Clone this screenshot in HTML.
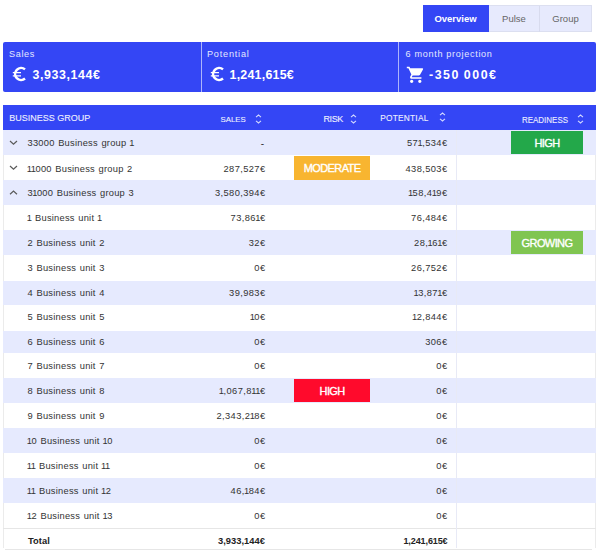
<!DOCTYPE html>
<html><head><meta charset="utf-8">
<style>
*{box-sizing:border-box;margin:0;padding:0}
html,body{width:600px;height:553px;background:#fff;overflow:hidden;font-family:"Liberation Sans",sans-serif;color:#333}
.abs{position:absolute}
.tabs{position:absolute;left:489px;top:5px;width:103px;height:27px;border:1px solid #dcdff0;border-left:none;background:#e7eafd}
.tab{position:absolute;top:0;height:26px;line-height:26px;font-size:9.5px;text-align:center;color:#666}
.ov{position:absolute;left:423px;top:5px;width:66px;height:27px;background:#3446f5;color:#fff;font-weight:700;font-size:9.5px;line-height:27px;text-align:center;padding-right:1px}
.cards{position:absolute;left:3px;top:42px;width:593px;height:50px;background:#3446f5;border-radius:2px}
.card{position:absolute;top:0;height:50px}
.card .lbl{position:absolute;left:6px;top:6.5px;font-size:9.1px;color:#e4e8ff;white-space:nowrap;letter-spacing:0.65px}
.card .val{position:absolute;left:29.5px;top:26px;font-size:12px;font-weight:700;color:#fff;white-space:nowrap;letter-spacing:0.6px}
.sep{position:absolute;top:0;width:1px;height:50px;background:rgba(255,255,255,0.6)}
.tbl{position:absolute;left:3px;top:105px;width:593px;height:443px;border-left:1px solid #ebebeb;border-right:1px solid #ebebeb}
.bline{position:absolute;left:5px;width:587px;top:549px;height:1px;background:#e6e6e6}
.hdr{position:absolute;left:3px;width:593px;top:105px;height:25px;background:#3446f5}
.h{position:absolute;color:#eef0ff;-webkit-text-stroke:0.1px #eef0ff;white-space:nowrap;font-size:9px}
.row{position:absolute;left:3px;width:593px;height:25px}
.row.alt{background:#e6eafe}
.t{position:absolute;white-space:nowrap;font-size:9.3px;color:#333;line-height:11px;letter-spacing:0.25px}
.n{letter-spacing:0.4px}
.o{letter-spacing:-0.5px;margin-left:-0.6px}
.w{word-spacing:0.7px}
.o2{letter-spacing:-0.5px;margin-left:-0.7px}
.r{text-align:right}
.vdiv{position:absolute;left:455.5px;top:130px;width:1px;height:418px;background:#e8eaf6}
.badge{position:absolute;color:#fff;font-size:11px;letter-spacing:-0.6px;-webkit-text-stroke:0.35px #fff;text-align:center;display:flex;align-items:center;justify-content:center;padding-top:0.6px}
.tline{position:absolute;left:3px;width:593px;top:528px;height:1px;background:#e6e6e6}

</style></head><body>

<div class="ov">Overview</div>
<div class="tabs">
  <div class="tab" style="left:0;width:51px;border-right:1px solid #d8dbee">Pulse</div>
  <div class="tab" style="left:51px;width:51px">Group</div>
</div>

<div class="cards">
  <div class="card" style="left:0;width:197px">
    <div class="lbl">Sales</div>
    <svg class="abs" style="left:9px;top:24px" width="15" height="16" viewBox="0 0 15 16"><path d="M13.01 3.35 A6 6 0 1 0 13.01 12.55" fill="none" stroke="#fff" stroke-width="2.5"/><path d="M0.8 6.65 H9 M0.8 9.85 H9" stroke="#fff" stroke-width="1.4"/></svg>
    <div class="val" style="font-size:12.4px;letter-spacing:0.6px;top:25.5px">3,933,144€</div>
  </div>
  <div class="sep" style="left:197.5px"></div>
  <div class="card" style="left:198px;width:197px">
    <div class="lbl" style="letter-spacing:0.8px">Potential</div>
    <svg class="abs" style="left:9px;top:24px" width="15" height="16" viewBox="0 0 15 16"><path d="M13.01 3.35 A6 6 0 1 0 13.01 12.55" fill="none" stroke="#fff" stroke-width="2.5"/><path d="M0.8 6.65 H9 M0.8 9.85 H9" stroke="#fff" stroke-width="1.4"/></svg>
    <div class="val" style="left:28.5px;font-size:12.4px;letter-spacing:0.25px;top:25.5px">1,241,615€</div>
  </div>
  <div class="sep" style="left:395px"></div>
  <div class="card" style="left:396px;width:197px">
    <div class="lbl" style="left:6.5px;letter-spacing:0.68px">6 month projection</div>
    <svg class="abs" style="left:7px;top:22.5px" width="19.5" height="19.5" viewBox="0 0 24 24"><path fill="#fff" d="M7 18c-1.1 0-1.990.9-1.99 2S5.9 22 7 22s2-.9 2-2-.9-2-2-2zM1 2v2h2l3.6 7.590-1.35 2.45c-.16.28-.25.61-.25.96 0 1.1.9 2 2 2h12v-2H7.42c-.14 0-.25-.11-.25-.25l.03-.12.9-1.630h7.45c.75 0 1.41-.41 1.75-1.030l3.58-6.490A1.003 1.003 0 0 0 20 4H5.210l-.94-2H1zm16 16c-1.1 0-1.99.9-1.99 2s.89 2 1.99 2 2-.9 2-2-.9-2-2-2z"/></svg>
    <div class="val" style="left:30px;font-size:12.4px;letter-spacing:1.55px;word-spacing:-1.2px;top:25.5px">-350 000€</div>
  </div>
</div>

<div class="tbl"></div>
<div class="hdr"></div>
<div class="h" style="left:9.3px;top:112.7px;font-size:9px">BUSINESS GROUP</div>
<div class="h" style="left:220.5px;top:114.5px;font-size:7.8px">SALES</div>
<div class="h" style="left:323.5px;top:113.5px;letter-spacing:-0.4px">RISK</div>
<div class="h" style="left:380.2px;top:112.7px;font-size:8.3px;letter-spacing:0.25px">POTENTIAL</div>
<div class="h" style="left:522px;top:114.2px;font-size:9.6px;transform:scaleX(0.83);transform-origin:0 0">READINESS</div>

<div class="row alt" style="top:130px;height:25px"></div>
<svg class="abs" style="left:9px;top:140.0px" width="9" height="5.5" viewBox="0 0 9 5.5"><path d="M1 1 L4.5 4.2 L8 1" fill="none" stroke="#5a5a5a" stroke-width="1.2"/></svg>
<div class="t w" style="left:27.5px;top:138.00px">33000 Business group <span class="o2">1</span></div>
<div class="t r" style="right:336px;top:137.80px;font-size:10px;letter-spacing:0">-</div>
<div class="t r n" style="right:152.5px;top:138.00px">57<span class="o">1</span>,534€</div>
<div class="badge" style="left:511px;width:72px;top:131.2px;height:22.6px;background:#23a84a">HIGH</div>
<div class="row" style="top:155px;height:25px"></div>
<svg class="abs" style="left:9px;top:165.0px" width="9" height="5.5" viewBox="0 0 9 5.5"><path d="M1 1 L4.5 4.2 L8 1" fill="none" stroke="#5a5a5a" stroke-width="1.2"/></svg>
<div class="t w" style="left:27.5px;top:164.00px"><span class="o2">1</span><span class="o2">1</span>000 Business group 2</div>
<div class="t r n" style="right:334.5px;top:164.00px">287,527€</div>
<div class="t r n" style="right:152.5px;top:164.00px">438,503€</div>
<div class="badge" style="left:294.2px;width:75.8px;top:155.90px;height:23.80px;background:#f8b530">MODERATE</div>
<div class="row alt" style="top:180px;height:25px"></div>
<svg class="abs" style="left:9px;top:190.0px" width="9" height="5.5" viewBox="0 0 9 5.5"><path d="M1 4.2 L4.5 1 L8 4.2" fill="none" stroke="#5a5a5a" stroke-width="1.2"/></svg>
<div class="t w" style="left:27.5px;top:188.00px">3<span class="o2">1</span>000 Business group 3</div>
<div class="t r n" style="right:334.5px;top:188.00px">3,580,394€</div>
<div class="t r n" style="right:152.5px;top:188.00px"><span class="o">1</span>58,4<span class="o">1</span>9€</div>
<div class="row" style="top:205px;height:25px"></div>
<div class="t w" style="left:27.5px;top:213.00px"><span class="o2">1</span> Business unit <span class="o2">1</span></div>
<div class="t r n" style="right:334.5px;top:213.00px">73,86<span class="o">1</span>€</div>
<div class="t r n" style="right:152.5px;top:213.00px">76,484€</div>
<div class="row alt" style="top:230px;height:25px"></div>
<div class="t w" style="left:27.5px;top:238.00px">2 Business unit 2</div>
<div class="t r n" style="right:334.5px;top:238.00px">32€</div>
<div class="t r n" style="right:152.5px;top:238.00px">28,<span class="o">1</span>6<span class="o">1</span>€</div>
<div class="badge" style="left:511px;width:72px;top:231.2px;height:22.6px;background:#80c551">GROWING</div>
<div class="row" style="top:255px;height:25.5px"></div>
<div class="t w" style="left:27.5px;top:263.00px">3 Business unit 3</div>
<div class="t r n" style="right:334.5px;top:263.00px">0€</div>
<div class="t r n" style="right:152.5px;top:263.00px">26,752€</div>
<div class="row alt" style="top:280.5px;height:24.80000000000001px"></div>
<div class="t w" style="left:27.5px;top:288.00px">4 Business unit 4</div>
<div class="t r n" style="right:334.5px;top:288.00px">39,983€</div>
<div class="t r n" style="right:152.5px;top:288.00px"><span class="o">1</span>3,87<span class="o">1</span>€</div>
<div class="row" style="top:305.3px;height:25.399999999999977px"></div>
<div class="t w" style="left:27.5px;top:312.00px">5 Business unit 5</div>
<div class="t r n" style="right:334.5px;top:312.00px"><span class="o">1</span>0€</div>
<div class="t r n" style="right:152.5px;top:312.00px"><span class="o">1</span>2,844€</div>
<div class="row alt" style="top:330.7px;height:21.900000000000034px"></div>
<div class="t w" style="left:27.5px;top:337.00px">6 Business unit 6</div>
<div class="t r n" style="right:334.5px;top:337.00px">0€</div>
<div class="t r n" style="right:152.5px;top:337.00px">306€</div>
<div class="row" style="top:352.6px;height:25.299999999999955px"></div>
<div class="t w" style="left:27.5px;top:361.00px">7 Business unit 7</div>
<div class="t r n" style="right:334.5px;top:361.00px">0€</div>
<div class="t r n" style="right:152.5px;top:361.00px">0€</div>
<div class="row alt" style="top:377.9px;height:24.700000000000045px"></div>
<div class="t w" style="left:27.5px;top:386.00px">8 Business unit 8</div>
<div class="t r n" style="right:334.5px;top:386.00px"><span class="o">1</span>,067,8<span class="o">1</span><span class="o">1</span>€</div>
<div class="t r n" style="right:152.5px;top:386.00px">0€</div>
<div class="badge" style="left:294.2px;width:75.8px;top:378.80px;height:23.50px;background:#ff0a2c">HIGH</div>
<div class="row" style="top:402.6px;height:25.299999999999955px"></div>
<div class="t w" style="left:27.5px;top:411.00px">9 Business unit 9</div>
<div class="t r n" style="right:334.5px;top:411.00px">2,343,2<span class="o">1</span>8€</div>
<div class="t r n" style="right:152.5px;top:411.00px">0€</div>
<div class="row alt" style="top:427.9px;height:24.700000000000045px"></div>
<div class="t w" style="left:27.5px;top:436.00px"><span class="o2">1</span>0 Business unit <span class="o2">1</span>0</div>
<div class="t r n" style="right:334.5px;top:436.00px">0€</div>
<div class="t r n" style="right:152.5px;top:436.00px">0€</div>
<div class="row" style="top:452.6px;height:25.399999999999977px"></div>
<div class="t w" style="left:27.5px;top:461.00px"><span class="o2">1</span><span class="o2">1</span> Business unit <span class="o2">1</span><span class="o2">1</span></div>
<div class="t r n" style="right:334.5px;top:461.00px">0€</div>
<div class="t r n" style="right:152.5px;top:461.00px">0€</div>
<div class="row alt" style="top:478px;height:24.5px"></div>
<div class="t w" style="left:27.5px;top:486.00px"><span class="o2">1</span><span class="o2">1</span> Business unit <span class="o2">1</span>2</div>
<div class="t r n" style="right:334.5px;top:486.00px">46,<span class="o">1</span>84€</div>
<div class="t r n" style="right:152.5px;top:486.00px">0€</div>
<div class="row" style="top:502.5px;height:25.799999999999955px"></div>
<div class="t w" style="left:27.5px;top:511.00px"><span class="o2">1</span>2 Business unit <span class="o2">1</span>3</div>
<div class="t r n" style="right:334.5px;top:511.00px">0€</div>
<div class="t r n" style="right:152.5px;top:511.00px">0€</div>
<div class="tline"></div><div class="bline"></div>
<div class="t" style="left:28px;top:536px;font-weight:700;color:#222;letter-spacing:0.1px">Total</div>
<div class="t r" style="right:335px;top:535.5px;font-weight:700;color:#222;font-size:9.3px;letter-spacing:0.05px">3,933,144€</div>
<div class="t r" style="right:152.5px;top:536px;font-weight:700;color:#222;font-size:9px;letter-spacing:-0.1px">1,241,615€</div>
<div class="vdiv"></div>
<svg class="abs" style="left:254.5px;top:113.5px" width="7" height="10" viewBox="0 0 7 10"><path d="M1 3.2 L3.5 1 L6 3.2 M1 6.8 L3.5 9 L6 6.8" fill="none" stroke="#d5dbff" stroke-width="1.05"/></svg>
<svg class="abs" style="left:350px;top:113.5px" width="7" height="10" viewBox="0 0 7 10"><path d="M1 3.2 L3.5 1 L6 3.2 M1 6.8 L3.5 9 L6 6.8" fill="none" stroke="#d5dbff" stroke-width="1.05"/></svg>
<svg class="abs" style="left:438.5px;top:112px" width="7" height="10" viewBox="0 0 7 10"><path d="M1 3.2 L3.5 1 L6 3.2 M1 6.8 L3.5 9 L6 6.8" fill="none" stroke="#d5dbff" stroke-width="1.05"/></svg>
<svg class="abs" style="left:577px;top:114px" width="7" height="10" viewBox="0 0 7 10"><path d="M1 3.2 L3.5 1 L6 3.2 M1 6.8 L3.5 9 L6 6.8" fill="none" stroke="#d5dbff" stroke-width="1.05"/></svg>

</body></html>
